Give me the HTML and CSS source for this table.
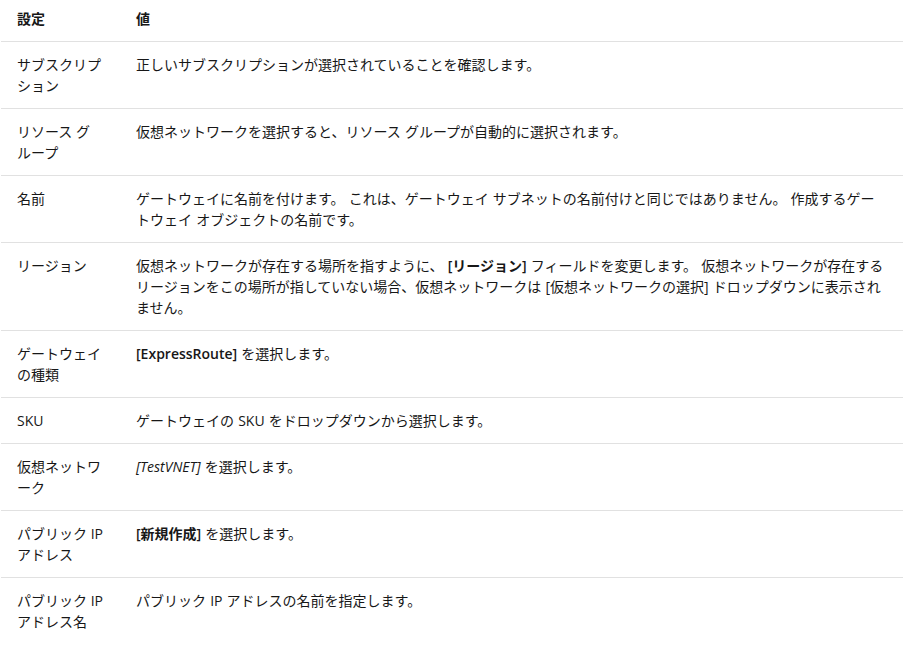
FILE: index.html
```html
<!DOCTYPE html>
<html lang="ja">
<head>
    <meta charset="UTF-8">
    <meta name="viewport" content="width=device-width, initial-scale=1.0">
    <title>仮想ネットワーク ゲートウェイの設定</title>
    <link rel="stylesheet" href="styles.css">
</head>
<body>
    <table class="settings">
        <thead>
            <tr>
                <th class="col-name">設定</th>
                <th>値</th>
            </tr>
        </thead>
        <tbody>
            <tr>
                <td>サブスクリプション</td>
                <td>正しいサブスクリプションが選択されていることを確認します。</td>
            </tr>
            <tr>
                <td>リソース グループ</td>
                <td>仮想ネットワークを選択すると、リソース グループが自動的に選択されます。</td>
            </tr>
            <tr>
                <td>名前</td>
                <td>ゲートウェイに名前を付けます。 これは、ゲートウェイ サブネットの名前付けと同じではありません。 作成するゲートウェイ オブジェクトの名前です。</td>
            </tr>
            <tr>
                <td>リージョン</td>
                <td>仮想ネットワークが存在する場所を指すように、 <strong>[リージョン]</strong> フィールドを変更します。 仮想ネットワークが存在するリージョンをこの場所が指していない場合、仮想ネットワークは [仮想ネットワークの選択] ドロップダウンに表示されません。</td>
            </tr>
            <tr>
                <td>ゲートウェイの種類</td>
                <td><strong>[ExpressRoute]</strong> を選択します。</td>
            </tr>
            <tr>
                <td>SKU</td>
                <td>ゲートウェイの SKU をドロップダウンから選択します。</td>
            </tr>
            <tr>
                <td>仮想ネットワーク</td>
                <td><em>[TestVNET]</em> を選択します。</td>
            </tr>
            <tr>
                <td>パブリック IP アドレス</td>
                <td><strong>[新規作成]</strong> を選択します。</td>
            </tr>
            <tr>
                <td>パブリック IP アドレス名</td>
                <td>パブリック IP アドレスの名前を指定します。</td>
            </tr>
        </tbody>
    </table>
</body>
</html>
```

FILE: styles.css
```css
body {
    margin: 0;
    padding: 0 0 0 1px;
    background: #fff;
    color: #171717;
    font-family: "Open Sans", "Noto Sans CJK JP", sans-serif;
    font-size: 14px;
    line-height: 21px;
}

.settings {
    width: 902px;
    border-collapse: collapse;
    table-layout: fixed;
}

.settings th,
.settings td {
    text-align: left;
    vertical-align: top;
    padding: 12px 16px;
    border-bottom: 1px solid #e1e1e1;
}

.settings tbody tr:last-child td {
    border-bottom: none;
}

/* first column: 86px of text, 119px in all */
.settings th:first-child,
.settings td:first-child {
    padding-right: 17px;
}

.settings td + td {
    word-spacing: 0.5px;
}

.settings th {
    font-weight: bold;
    padding-top: 8px;
}

.settings .col-name {
    width: 86px;
}

.settings strong {
    font-weight: 600;
}

.settings em {
    font-style: italic;
}
```
